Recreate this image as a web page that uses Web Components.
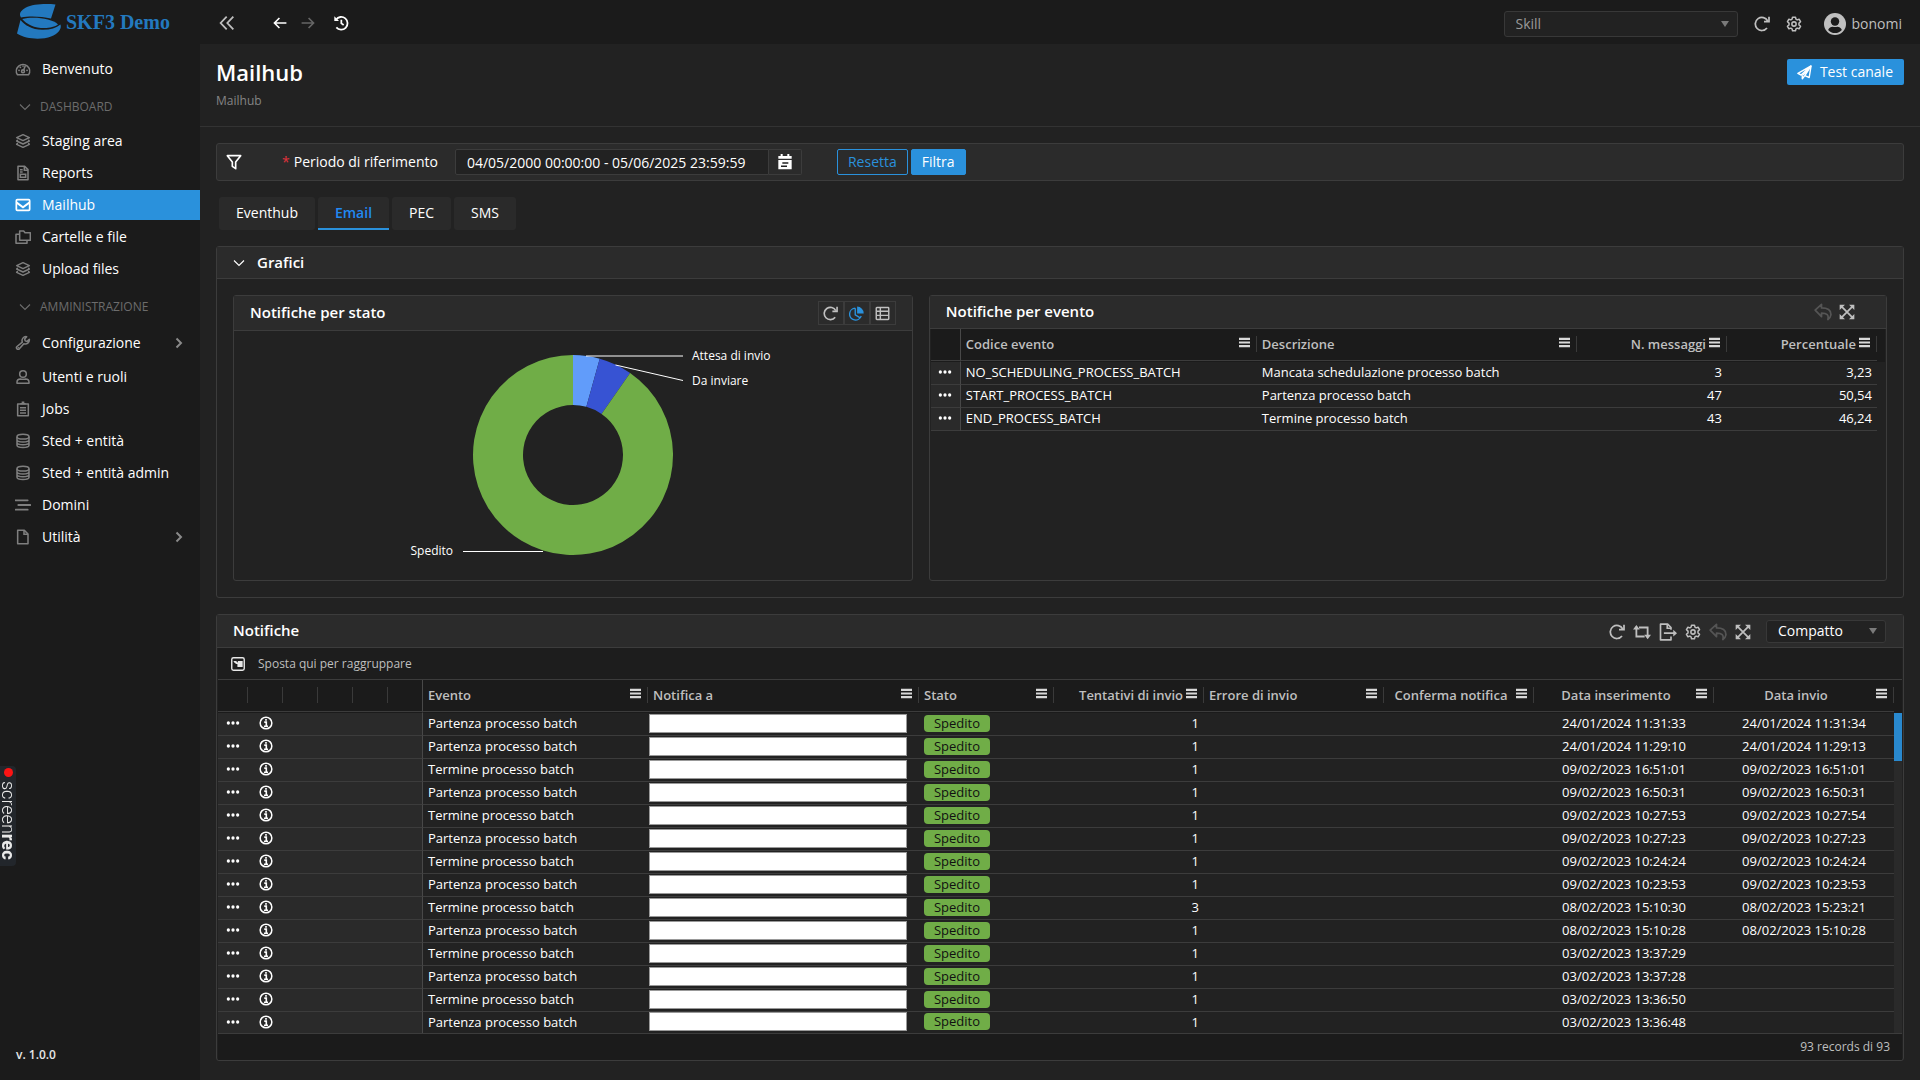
<!DOCTYPE html>
<html lang="it">
<head>
<meta charset="utf-8">
<title>SKF3 Demo - Mailhub</title>
<style>
:root{
  --bg:#222;--dark:#1b1b1b;--raised:#2b2b2b;--line:#3c3c3c;--primary:#2a91dc;
  --text:#fff;--muted:#bfbfbf;--green:#70ad47;
}
body{margin:0;background:var(--bg);color:var(--text);font:14px/20px "Open Sans","Noto Sans",sans-serif}
</style>
</head>
<body>
<sk-app>
  <sk-sidebar slot="side">
    <sk-nav-item icon="gauge">Benvenuto</sk-nav-item>
    <sk-nav-group>Dashboard</sk-nav-group>
    <sk-nav-item icon="layers">Staging area</sk-nav-item>
    <sk-nav-item icon="report">Reports</sk-nav-item>
    <sk-nav-item icon="mail" active>Mailhub</sk-nav-item>
    <sk-nav-item icon="folders">Cartelle e file</sk-nav-item>
    <sk-nav-item icon="layers">Upload files</sk-nav-item>
    <sk-nav-group>Amministrazione</sk-nav-group>
    <sk-nav-item icon="wrench" expandable large>Configurazione</sk-nav-item>
    <sk-nav-item icon="user">Utenti e ruoli</sk-nav-item>
    <sk-nav-item icon="clipboard">Jobs</sk-nav-item>
    <sk-nav-item icon="db">Sted + entità</sk-nav-item>
    <sk-nav-item icon="db">Sted + entità admin</sk-nav-item>
    <sk-nav-item icon="lines">Domini</sk-nav-item>
    <sk-nav-item icon="file" expandable>Utilità</sk-nav-item>
  </sk-sidebar>
  <sk-topbar slot="top"></sk-topbar>
  <sk-page-header slot="head"></sk-page-header>
  <sk-filter-bar></sk-filter-bar>
  <sk-tabs></sk-tabs>
  <sk-panel heading="Grafici" collapsible>
    <sk-charts>
      <sk-panel slot="left" heading="Notifiche per stato" tall>
        <sk-view-switch slot="tools"></sk-view-switch>
        <sk-donut></sk-donut>
      </sk-panel>
      <sk-panel slot="right" heading="Notifiche per evento">
        <sk-tools slot="tools" icons="undo expand"></sk-tools>
        <sk-grid source="eventi"></sk-grid>
      </sk-panel>
    </sk-charts>
  </sk-panel>
  <sk-panel heading="Notifiche">
    <sk-tools slot="tools" icons="refresh repeat export gear undo expand" density></sk-tools>
    <sk-group-drop></sk-group-drop>
    <sk-grid source="notifiche" scroll></sk-grid>
    <sk-status>93 records di 93</sk-status>
  </sk-panel>
</sk-app>
<sk-recorder></sk-recorder>

<script>
const ICONS = {
  gauge:'<path d="M3.5 20.5A10 10 0 1 1 20.500 20.500Z" stroke-linejoin="round"/><circle cx="12" cy="15.500" r="2.200"/><path d="M13 13.500l2.500-6.500"/><path d="M6 14h.1M8 9.500h.1M18 14h.1M12 7.500h.1" stroke-width="2.600" stroke-linecap="round"/>',
  layers:'<path d="M12 2.500L21.500 7 12 11.500 2.500 7Z" stroke-linejoin="round"/><path d="M3.500 11L2.500 12l9.500 4.500 9.500-4.500-1-1M3.500 16l-1 1 9.500 4.500 9.500-4.500-1-1" stroke-linejoin="round" stroke-linecap="round"/>',
  report:'<path d="M4.500 2h10l5 5v15h-15Z" stroke-linejoin="round"/><path d="M14 2v6h5.500M7.500 7h4M7.500 10.500h4M8 14h8v4.500H8Z"/>',
  mail:'<rect x="2" y="4" width="20" height="16" rx="1.500" stroke-width="2.600"/><path d="M2.500 8.500l9.500 7 9.500-7" stroke-width="3"/>',
  folders:'<path d="M7 3h6l2 2.500h8V17H7Z" stroke-linejoin="round"/><path d="M7 8H1.500v13.500H18V17" stroke-linejoin="round"/>',
  wrench:'<path d="M21.500 6.500a6 6 0 0 1-8.200 6.500L6.500 20.800a2.400 2.400 0 0 1-3.500-3.500L11 10.700A6 6 0 0 1 17.500 2.500L14.500 6l.8 2.800 2.800.8Z" stroke-linejoin="round"/><path d="M5 19h.1" stroke-linecap="round"/>',
  user:'<circle cx="12" cy="7.500" r="5"/><path d="M3 21.500v-1.500c0-3 2-5 5-5 1.500.7 6.500.7 8 0 3 0 5 2 5 5v1.500Z" stroke-linejoin="round"/>',
  clipboard:'<path d="M4 4.500h16V22H4Z" stroke-linejoin="round"/><path d="M8 4h8M10 2h4M7.500 10h9M7.500 14h9M7.500 18h9" stroke-width="2.200"/>',
  db:'<ellipse cx="12" cy="5.500" rx="9" ry="3.500"/><path d="M3 5.500v13c0 4.500 18 4.500 18 0v-13M3 10c0 4.500 18 4.500 18 0M3 14.300c0 4.500 18 4.500 18 0"/>',
  lines:'<path d="M1 5h18M5 12h18M1 19h18" stroke-width="2.800" stroke-linecap="round"/>',
  file:'<path d="M4 2h10l5.500 5.500V22H4Z" stroke-linejoin="round"/><path d="M13.500 2v6H19.500"/>',
  down:'<path d="M2 7l10 10L22 7"/>',
  right:'<path d="M7 3l9 9-9 9" stroke-width="4"/>',
  dleft:'<path d="M11.500 2.500L2.500 12l9 9.500M21.500 2.500L12.500 12l9 9.500" stroke-width="2.700"/>',
  back:'<path d="M11 3.500L2.500 12 11 20.500M2.500 12H23" stroke-width="2.800"/>',
  fwd:'<path d="M13 3.500L21.500 12 13 20.500M21.500 12H1" stroke-width="2.800"/>',
  history:'<path d="M4.500 7A9.500 9.500 0 1 1 5 18.500" stroke-width="2.700"/><path d="M2 2v7h7Z" fill="currentColor" stroke="none"/><path d="M12.500 7v5.500l3.500 2.500" stroke-width="2.600"/>',
  refresh:'<path d="M20.500 7.500A9.800 9.800 0 1 0 19.500 18" stroke-width="2.600"/><path d="M15 8.500h7.500V1" stroke-width="2.600"/>',
  gear:'<path d="M9.800 1.800h4.400l.7 3 1.800 1 2.900-1 2.200 3.800-2.300 2v2.800l2.300 2-2.200 3.800-2.900-1-1.800 1-.7 3H9.800l-.7-3-1.800-1-2.900 1-2.200-3.800 2.300-2v-2.800l-2.300-2 2.200-3.800 2.900 1 1.800-1Z" stroke-linejoin="round"/><circle cx="12" cy="12" r="3.200"/>',
  account:'<circle cx="12" cy="12" r="12" fill="currentColor" stroke="none"/><g fill="#1b1b1b" stroke="none"><circle cx="12" cy="9.200" r="4.600"/><path d="M4.500 18.500c1-2.600 3-3.600 5-3.600 1.500.6 3.500.6 5 0 2 0 4 1 5 3.600a10 10 0 0 1-15 0Z"/></g>',
  send:'<path d="M22.500 1.500L1.500 13.500l5 2.500L22.500 1.500 19.500 20l-7-3-4 5v-5.500" stroke-linejoin="round"/><path d="M9 16.500L22 2l-9.500 15" stroke-linejoin="round"/>',
  funnel:'<path d="M2 2.500h20L14.500 12v10l-5-3.500V12Z" stroke-width="2.500" stroke-linejoin="round"/>',
  calendar:'<path d="M2 3h20v4H2ZM2 9h20v14H2Z" fill="currentColor" stroke="none"/><path d="M7 0v5M17 0v5" stroke-width="3"/><path d="M8 13.500h9M6 18.500h9" stroke="#222"/>',
  pie:'<path d="M10 3.500A9.500 9.500 0 1 0 19.500 16M10 3.500V14l8 5" stroke-width="2.200"/><path d="M13 1a10.500 10.500 0 0 1 10.500 11H13Z" fill="currentColor" stroke="none"/>',
  table:'<rect x="2" y="2.500" width="20" height="19" rx="1"/><path d="M2 8.500h20M2 15h20M8.500 2.500v19" />',
  undo:'<path d="M1.500 9.500L10 1.800v4.700c8 0 13 2.500 12.500 9.500-.3 2.500-1.800 4.500-4 6 1.500-6-1-8.500-8.500-8.500v4.700Z" stroke-linejoin="round"/>',
  expand:'<path d="M4 4l16 16M20 4L4 20" stroke-width="2.600"/><path d="M1 1h8L1 9ZM23 1v8l-8-8ZM1 23v-8l8 8ZM23 23h-8l8-8Z" fill="currentColor" stroke="none"/>',
  repeat:'<path d="M4.500 5v13h11M8 6h11.500v12" stroke-width="2.400"/><path d="M0 8.500L4.500 2.500 9 8.500ZM15 15.500l4.500 6 4.500-6Z" fill="currentColor" stroke="none"/>',
  export:'<path d="M16 9V6l-4.500-4.500H2v21h14V18" stroke-width="2.200" stroke-linejoin="round"/><path d="M11 1.500V7h5M6.500 13.500H22" stroke-width="2.200"/><path d="M19 9l5 4.500-5 4.500Z" fill="currentColor" stroke="none"/>',
  dots:'<path d="M4 12h.01M12 12h.01M20 12h.01" stroke-width="5.600" stroke-linecap="round"/>',
  info:'<circle cx="12" cy="12" r="10" stroke-width="2.600"/><path d="M12 5v3.200M9 10.500h3.500V17M8.500 17.500h7" stroke-width="2.800"/>',
  menu:'<path d="M0 4.200h24M0 12h24M0 19.800h24" stroke-width="4.800"/>',
  group:'<rect x="1.300" y="1.300" width="21.400" height="21.400" rx="3" stroke-width="2.400"/><path d="M4 7h5l2 3 1-3h8v10h-9v-5l-2 0-3-2Z" fill="currentColor" stroke="none"/>'
};
const define = (name, css, html, setup) => {
  const tpl = document.createElement('template');
  tpl.innerHTML = `<style>:host,*{box-sizing:border-box}button,input,select{font:inherit;color:inherit;margin:0}button{background:none;border:0;padding:0;display:inline-flex;align-items:center;justify-content:center}${css}</style>${html}`;
  customElements.define(name, class extends HTMLElement {
    connectedCallback() {
      if (this.shadowRoot) return;
      const root = this.attachShadow({mode: 'open'});
      root.append(tpl.content.cloneNode(true));
      if (setup) setup(this, root);
    }
  });
};

define('sk-icon', ':host{display:inline-flex;width:var(--size,16px);height:var(--size,16px);flex:none}svg{width:100%;height:100%;display:block}', '',
  (el, root) => root.append(document.createRange().createContextualFragment(
    `<svg viewBox="0 0 24 24" fill="none" stroke="currentColor" stroke-width="2.300" aria-hidden="true">${ICONS[el.getAttribute('name')]}</svg>`)));

define('sk-app', `
:host{display:grid;grid-template-columns:200px minmax(0,1fr);grid-template-rows:44px auto;min-height:100vh}
aside{grid-row:1/3;background:var(--dark);display:flex}
::slotted(sk-sidebar){flex:1}
.body{display:flex;flex-direction:column}
main{padding:16px;display:flex;flex-direction:column;gap:16px}`,
`<aside><slot name="side"></slot></aside><slot name="top"></slot>
<div class="body"><slot name="head"></slot><main><slot></slot></main></div>`);

define('sk-sidebar', `
:host{display:flex;flex-direction:column}
.brand{height:44px;margin-bottom:10px;padding:0 0 0 16px;display:flex;align-items:center;gap:4px;color:#2379bf;font:bold 20px/24px "Liberation Serif",serif}
svg{width:46px;height:36px;flex:none}
nav{display:flex;flex-direction:column;gap:2px;flex:1}
.ver{padding:0 16px;margin-bottom:16px;font-size:12px;line-height:18px;font-weight:600;color:#e6e6e6}`,
`<div class="brand"><svg viewBox="0 0 46 36" aria-hidden="true"><g fill="currentColor"><path d="M39.500.500C29-.500 17 0 9.500 3.800 3.500 7 3 11 5 13.500 14 11.500 26 12.500 35 14.500Z"/><path d="M6.200 15C18 12.300 36 14.500 42 20.500 37 24.500 24 25.500 15 21.500 11 19.500 8.200 17.500 6.200 15Z"/><path d="M4.500 16C9 21.500 16 25.500 26 25.800 34 26 40 24 44.500 20.500 46 25 42 30 35 32.500 26 36 10 35.500 1 29.500Z"/></g></svg><span>SKF3 Demo</span></div>
<nav><slot></slot></nav><div class="ver">v. 1.0.0</div>`);

define('sk-nav-item', `
:host{display:block}
a{display:flex;align-items:center;height:30px;padding:0 15px 0 14px;gap:10px;color:#fff;text-decoration:none}
:host([large]) a{height:34px}
.i{width:18px;display:flex;justify-content:center;color:#7f7f7f}
.t{flex:1;white-space:nowrap}
.c{--size:12px;color:#8a8a8a}
:host([active]) a{background:var(--primary)}
:host([active]) .i{color:#fff}`,
`<a href="#"><span class="i"></span><span class="t"><slot></slot></span></a>`,
(el, root) => {
  root.querySelector('.i').innerHTML = `<sk-icon name="${el.getAttribute('icon')}"></sk-icon>`;
  if (el.hasAttribute('expandable')) root.querySelector('a').insertAdjacentHTML('beforeend', '<sk-icon class="c" name="right"></sk-icon>');
});

define('sk-nav-group', `
:host{display:block}
button{height:38px;padding:3px 0 0 19px;gap:9px;text-transform:uppercase;font-size:12px;font-weight:500;color:#6c6c6c}
sk-icon{--size:12px}`,
`<button type="button"><sk-icon name="down"></sk-icon><slot></slot></button>`);

define('sk-select', `
:host{display:block;position:relative;width:var(--w);flex:none}
select{appearance:none;display:block;width:100%;height:var(--h);border:1px solid #383838;border-radius:3px;background:var(--bg);padding:0 24px 0 11px;outline:0}
:host::after{content:"";position:absolute;right:9px;top:calc(50% - 3px);border:4px solid transparent;border-top:6px solid #7a7a7a;border-bottom:0;pointer-events:none}`,
`<select></select>`,
(el, root) => {
  const s = root.querySelector('select');
  s.setAttribute('aria-label', el.getAttribute('label'));
  s.innerHTML = `<option>${el.getAttribute('value')}</option>`;
});

define('sk-topbar', `
:host{display:flex;align-items:center;justify-content:space-between;background:var(--dark);padding:3px 18px 0 19px;color:var(--muted)}
div{display:flex;align-items:center}
.nav{color:#fff;padding-bottom:2px}
.nav button:nth-child(1){color:var(--muted);margin-right:38px}
.nav button:nth-child(2){margin-right:14px}
.nav button:nth-child(3){color:#666;margin-right:18px}
.nav sk-icon{--size:14px}
.nav button:nth-child(4) sk-icon,.nav button:nth-child(1) sk-icon{--size:16px}
.user{gap:16px}
.me{gap:6px;margin-left:6px}
.me sk-icon{--size:22px}
sk-select{--w:234px;--h:26px;color:#9a9a9a}`,
`<div class="nav"><button type="button" aria-label="Riduci menu"><sk-icon name="dleft"></sk-icon></button><button type="button" aria-label="Indietro"><sk-icon name="back"></sk-icon></button><button type="button" aria-label="Avanti"><sk-icon name="fwd"></sk-icon></button><button type="button" aria-label="Cronologia"><sk-icon name="history"></sk-icon></button></div>
<div class="user"><sk-select label="Modulo" value="Skill"></sk-select><button type="button" aria-label="Aggiorna"><sk-icon name="refresh"></sk-icon></button><button type="button" aria-label="Impostazioni"><sk-icon name="gear"></sk-icon></button><button type="button" class="me"><sk-icon name="account"></sk-icon>bonomi</button></div>`);

define('sk-page-header', `
:host{display:flex;justify-content:space-between;align-items:flex-start;padding:15px 16px 16px;border-bottom:1px solid #333}
h1{margin:0;font-size:22px;line-height:26px;font-weight:600}
p{margin:7px 0 0;font-size:12px;line-height:18px;color:#858585}
button{height:26px;padding:0 11px 0 10px;gap:8px;background:var(--primary);border-radius:2px;color:#fff}
sk-icon{--size:15px}`,
`<div><h1>Mailhub</h1><p>Mailhub</p></div><button type="button"><sk-icon name="send"></sk-icon>Test canale</button>`);

define('sk-filter-bar', `
:host{display:block}
form{display:flex;align-items:center;height:38px;border:1px solid var(--line);border-radius:3px;background:var(--raised);padding:0 9px}
.f{--size:16px;margin-right:40px}
label{margin-right:17px}
label::before{content:"*";color:#e0323c;margin-right:4px}
input{width:314px;height:26px;border:1px solid var(--line);border-radius:2px 0 0 2px;background:var(--bg);padding:0 11px;outline:0}
.cal{width:33px;height:26px;border:1px solid var(--line);border-left:0;border-radius:0 2px 2px 0;margin-right:35px}
.cal sk-icon{--size:16px}
.b{height:26px;border:1px solid var(--primary);border-radius:2px;padding:0 10px;margin-right:3px;color:var(--primary)}
.p{background:var(--primary);color:#fff}`,
`<form><sk-icon class="f" name="funnel"></sk-icon><label for="range">Periodo di riferimento</label><input id="range" type="text" value="04/05/2000 00:00:00 - 05/06/2025 23:59:59"><button class="cal" type="button" aria-label="Calendario"><sk-icon name="calendar"></sk-icon></button><button class="b" type="button">Resetta</button><button class="b p" type="button">Filtra</button></form>`);

define('sk-tabs', `
:host{display:flex;gap:3px;padding-left:3px}
button{height:33px;padding:0 17px;background:#2a2a2a;border-radius:3px;border-bottom:2px solid transparent}
[aria-selected=true]{color:#2189f3;font-weight:600;border-color:var(--primary);border-radius:3px 3px 0 0}`,
`<button role="tab" type="button">Eventhub</button><button role="tab" type="button" aria-selected="true">Email</button><button role="tab" type="button">PEC</button><button role="tab" type="button">SMS</button>`);

define('sk-panel', `
:host{display:flex;flex-direction:column;border:1px solid var(--line);border-radius:3px}
header{display:flex;align-items:center;height:33px;padding:0 16px;background:var(--raised);border-bottom:1px solid var(--line)}
:host([collapsible]) header{height:32px}
:host([tall]) header{height:35px}
h2{margin:0;padding-bottom:2px;flex:1;font-size:15px;line-height:20px;font-weight:600}
.chev{--size:12px;margin-right:12px}
.chev{display:none}
:host([collapsible]) .chev{display:flex}`,
`<header><button type="button" class="chev" aria-label="Comprimi"><sk-icon name="down"></sk-icon></button><h2></h2><slot name="tools"></slot></header><slot></slot>`,
(el, root) => root.querySelector('h2').textContent = el.getAttribute('heading'));

define('sk-charts', `
:host{display:grid;grid-template-columns:repeat(12,minmax(0,1fr));gap:16px;padding:16px}
slot[name=left]::slotted(*){grid-column:span 5}
slot[name=right]::slotted(*){grid-column:span 7}`,
`<slot name="left"></slot><slot name="right"></slot>`);

define('sk-view-switch', `
:host{display:flex;color:var(--muted)}
button{width:26px;height:24px;border:1px solid var(--line)}
.on{color:var(--primary)}
sk-icon{--size:15px}`,
`<button type="button" aria-label="Aggiorna"><sk-icon name="refresh"></sk-icon></button><button type="button" class="on" aria-label="Grafico"><sk-icon name="pie"></sk-icon></button><button type="button" aria-label="Tabella"><sk-icon name="table"></sk-icon></button>`);

define('sk-tools', `
:host{display:flex;align-items:center;gap:7px;color:var(--muted);margin-right:15px}
:host([density]){margin-right:1px;gap:8px}
:host([density]) button{padding-top:2px}
.undo{color:#555;--size:18px}
.export,.repeat{--size:18px}
sk-select{--w:120px;--h:23px;color:#fff;margin-left:7px}`,
``, (el, root) => {
  const names = {undo:'Annulla', expand:'Espandi', refresh:'Aggiorna', repeat:'Ripeti', export:'Esporta', gear:'Impostazioni'};
  const html = el.getAttribute('icons').split(' ').map(n => `<button type="button" aria-label="${names[n]}" class="${n}"><sk-icon name="${n}"></sk-icon></button>`).join('')
    + (el.hasAttribute('density') ? '<sk-select label="Densità" value="Compatto"></sk-select>' : '');
  root.append(document.createRange().createContextualFragment(html));
});

// Donut: the three states as counts; the remainder of the ring is "Spedito".
define('sk-donut', ':host{display:flex;justify-content:center;height:249px}svg{width:360px;height:249px;overflow:visible;font-size:12px}text{fill:#fff}.l{stroke:#fff;fill:none}', '',
(el, root) => {
  const cx = 180, cy = 124, R = 100, r = 50;
  const pt = (a, q) => `${(cx + q * Math.sin(a)).toFixed(2)} ${(cy - q * Math.cos(a)).toFixed(2)}`;
  let a = 0, paths = '';
  for (const [n, c] of [[4, '#619cfa'], [5, '#3753d3'], [84, '#70ad47']]) {
    const b = a + n / 93 * 2 * Math.PI, big = b - a > Math.PI ? 1 : 0;
    paths += `<path fill="${c}" d="M${pt(a, R)}A${R} ${R} 0 ${big} 1 ${pt(b, R)}L${pt(b, r)}A${r} ${r} 0 ${big} 0 ${pt(a, r)}Z"/>`;
    a = b;
  }
  root.append(document.createRange().createContextualFragment(`<svg viewBox="0 0 360 249" role="img" aria-label="Notifiche per stato">${paths}
<path class="l" d="M193 25H290M222.500 34L290 49.500M150 220.500H70"/><text x="299" y="29">Attesa di invio</text><text x="299" y="54">Da inviare</text><text x="60" y="224" text-anchor="end">Spedito</text></svg>`));
});

define('sk-group-drop', `
:host{display:flex;align-items:center;gap:13px;height:32px;margin:0 1px;padding-left:13px;background:#1d1d1d;border-bottom:1px solid var(--line);font-size:12px;color:var(--muted)}
sk-icon{--size:14px;color:#e8e8e8}`,
`<sk-icon name="group"></sk-icon><span>Sposta qui per raggruppare</span>`);

define('sk-status', ':host{display:flex;justify-content:flex-end;align-items:center;height:27px;margin:0 1px;padding:0 12px;background:var(--dark);border-top:1px solid var(--line);font-size:12px;color:var(--muted)}', '<slot></slot>');

const P = 'Partenza processo batch', T = 'Termine processo batch';
const row = (e, n, ins, inv) => ({evento: e, n, ins, inv});
const GRIDS = {
  eventi: {
    label: 'Notifiche per evento',
    cols: [
      {w: 30, pin: true, type: 'dots', end: true},
      {w: 296, t: 'Codice evento', k: 'c'},
      {t: 'Descrizione', k: 'd'},
      {w: 150, t: 'N. messaggi', k: 'n', al: 'right'},
      {w: 150, t: 'Percentuale', k: 'p', al: 'right'}],
    rows: [
      {c: 'NO_SCHEDULING_PROCESS_BATCH', d: 'Mancata schedulazione processo batch', n: 3, p: '3,23'},
      {c: 'START_PROCESS_BATCH', d: P, n: 47, p: '50,54'},
      {c: 'END_PROCESS_BATCH', d: T, n: 43, p: '46,24'}]
  },
  notifiche: {
    label: 'Notifiche',
    cols: [
      {w: 30, pin: true, type: 'dots'}, {w: 35, pin: true, type: 'info'}, {w: 35, pin: true}, {w: 35, pin: true}, {w: 35, pin: true}, {w: 35, pin: true, end: true},
      {w: 225, t: 'Evento', k: 'evento'},
      {t: 'Notifica a', type: 'hidden'},
      {w: 135, t: 'Stato', type: 'badge'},
      {w: 150, t: 'Tentativi di invio', k: 'n', al: 'right'},
      {w: 180, t: 'Errore di invio'},
      {w: 150, t: 'Conferma notifica', al: 'center'},
      {w: 180, t: 'Data inserimento', k: 'ins', al: 'center'},
      {w: 180, t: 'Data invio', k: 'inv', al: 'center'}],
    rows: [
      row(P, 1, '24/01/2024 11:31:33', '24/01/2024 11:31:34'),
      row(P, 1, '24/01/2024 11:29:10', '24/01/2024 11:29:13'),
      row(T, 1, '09/02/2023 16:51:01', '09/02/2023 16:51:01'),
      row(P, 1, '09/02/2023 16:50:31', '09/02/2023 16:50:31'),
      row(T, 1, '09/02/2023 10:27:53', '09/02/2023 10:27:54'),
      row(P, 1, '09/02/2023 10:27:23', '09/02/2023 10:27:23'),
      row(T, 1, '09/02/2023 10:24:24', '09/02/2023 10:24:24'),
      row(P, 1, '09/02/2023 10:23:53', '09/02/2023 10:23:53'),
      row(T, 3, '08/02/2023 15:10:30', '08/02/2023 15:23:21'),
      row(P, 1, '08/02/2023 15:10:28', '08/02/2023 15:10:28'),
      row(T, 1, '03/02/2023 13:37:29', ''),
      row(P, 1, '03/02/2023 13:37:28', ''),
      row(T, 1, '03/02/2023 13:36:50', ''),
      row(P, 1, '03/02/2023 13:36:48', '')]
  }
};

define('sk-grid', `
:host{display:grid;grid-template-columns:minmax(0,1fr) 8px;padding:0 1px;font-size:13px;line-height:18px}
table{width:100%;table-layout:fixed;border-collapse:separate;border-spacing:0}
th{height:32px;padding:0 0 2px;background:var(--dark);border-bottom:1px solid var(--line);font-weight:600;color:var(--muted);text-align:left}
th div{display:flex;align-items:center;gap:3px;height:16px;padding:0 6px 0 5px;border-right:1px solid #3a3a3a;white-space:nowrap}
th span{flex:1}
th button{color:#d8d8d8;--size:11px;padding-bottom:2px}
th.end div{border:0}
td{height:23px;padding:0 5px 2px;border-bottom:1px solid var(--line);white-space:nowrap}
tbody tr:first-child td{height:24px;border-top:1px solid var(--dark)}
:host([scroll]) tbody tr:last-child td{height:21px;border-bottom:0}
td.pin{background:#2a2a2a;text-align:center;padding:0 0 2px}
.end{border-right:1px solid #484848}
td.tight{padding:0 12px 2px 1px}
.right{text-align:right}.center{text-align:center}
td button{vertical-align:top;height:18px;--size:14px}
.mask{display:block;height:19px;background:#fff;border:1px solid #999}
.badge{display:block;width:66px;height:17px;line-height:17px;border-radius:4px;background:var(--green);color:#111;text-align:center}
.bar{display:flex;flex-direction:column}
.bar::before{content:"";height:33px;background:var(--dark)}
:host([scroll]) .bar{background:#2a2a2a}
:host([scroll]) .bar i{height:48px;background:#2989cf}`,
`<table></table><div class="bar"><i></i></div>`,
(el, root) => {
  const g = GRIDS[el.getAttribute('source')];
  const cls = c => [c.pin && 'pin', c.end && 'end', c.al, (c.type === 'hidden') && 'tight'].filter(Boolean).join(' ');
  const cell = (c, r) => c.type === 'dots' ? '<button type="button" aria-label="Azioni"><sk-icon name="dots"></sk-icon></button>'
    : c.type === 'info' ? '<button type="button" aria-label="Dettagli"><sk-icon name="info"></sk-icon></button>'
    : c.type === 'hidden' ? '<span class="mask"></span>'
    : c.type === 'badge' ? '<span class="badge">Spedito</span>' : (r[c.k] ?? '');
  const t = root.querySelector('table');
  t.setAttribute('aria-label', g.label);
  t.innerHTML = `<colgroup>${g.cols.map(c => `<col${c.w ? ` style="width:${c.w}px"` : ''}>`).join('')}</colgroup>
<thead><tr>${g.cols.map(c => `<th class="${cls(c)}"><div>${c.t ? `<span>${c.t}</span><button type="button" aria-label="Menu colonna"><sk-icon name="menu"></sk-icon></button>` : ''}</div></th>`).join('')}</tr></thead>
<tbody>${g.rows.map(r => `<tr>${g.cols.map(c => `<td class="${cls(c)}">${cell(c, r)}</td>`).join('')}</tr>`).join('')}</tbody>`;
});

define('sk-recorder', `
:host{position:fixed;left:0;top:766px;display:flex;flex-direction:column;align-items:center;width:16px;height:100px;border-radius:0 4px 4px 0;background:#22262b;font:300 18px/16px Roboto,sans-serif;color:#e8e8e8}
i{width:9px;height:9px;border-radius:50%;background:#fb1414;margin:2px 0 4px}
span{writing-mode:vertical-rl}b{font-weight:800}`,
`<i></i><span>screen<b>rec</b></span>`);
</script>
</body>
</html>
